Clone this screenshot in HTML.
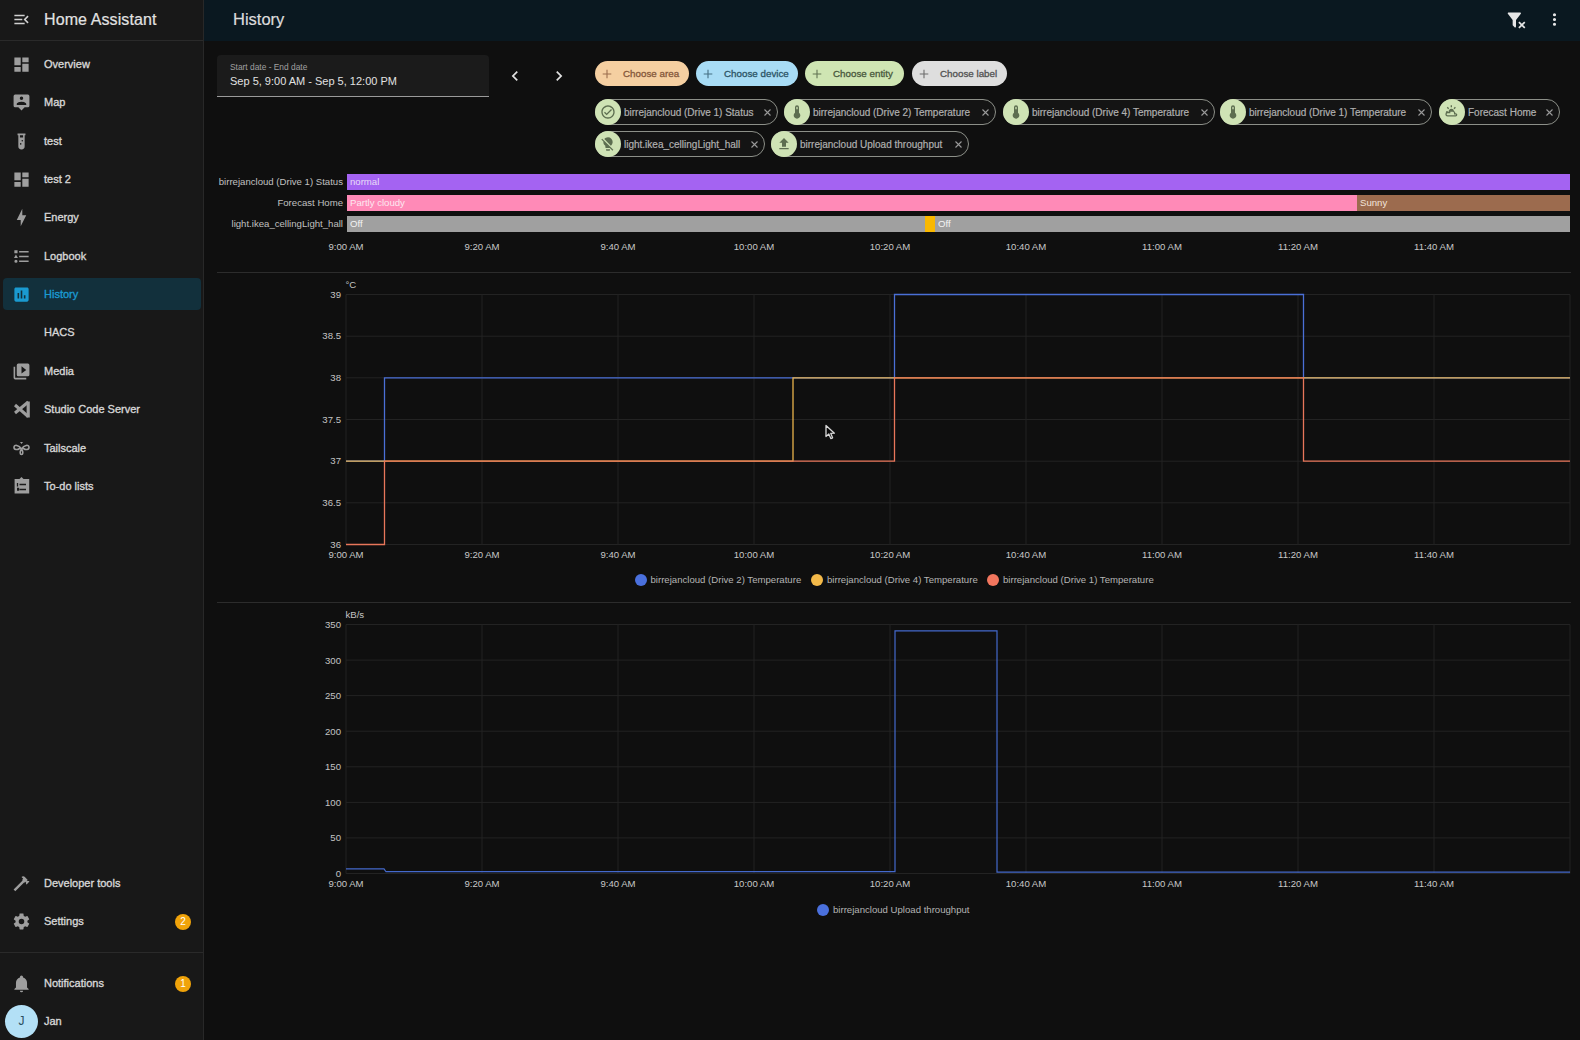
<!DOCTYPE html><html><head><meta charset="utf-8"><style>
*{box-sizing:border-box}
html,body{margin:0;padding:0;width:1580px;height:1040px;overflow:hidden;background:#0f0f0f;font-family:"Liberation Sans", sans-serif}
.a{position:absolute}
.sb{position:absolute;left:0;top:0;width:204px;height:1040px;background:#181818;border-right:1px solid #282828}
.it{position:absolute;left:44px;font-size:11px;color:#d6d6d6;white-space:nowrap;-webkit-text-stroke:0.35px #d6d6d6;line-height:14px}
.t{position:absolute;white-space:nowrap;line-height:1}
</style></head><body>

<div class="sb"></div>
<div class="a" style="left:0;top:40px;width:203px;height:1px;background:#2a2a2a"></div>
<svg style="position:absolute;left:12px;top:10px" width="19" height="19" viewBox="0 0 24 24"><path fill="#d0d0d0" d="M21,15.61L19.59,17L14.58,12L19.59,7L21,8.39L17.44,12L21,15.61M3,6H16V8H3V6M3,13V11H13V13H3M3,18V16H16V18H3Z"/></svg>
<div class="t" style="left:44px;top:12px;font-size:16px;letter-spacing:0.1px;color:#e2e2e2;-webkit-text-stroke:0.2px #e2e2e2">Home Assistant</div>
<div class="a" style="left:3px;top:278px;width:198px;height:32px;border-radius:4px;background:#12303c"></div>
<svg style="position:absolute;left:12px;top:54.7px" width="19" height="19" viewBox="0 0 24 24"><path fill="#9e9e9e" d="M13,3V9H21V3M13,21H21V11H13M3,21H11V15H3M3,13H11V3H3V13Z"/></svg>
<div class="it" style="top:57px;color:#d6d6d6;-webkit-text-stroke:0.35px #d6d6d6">Overview</div>
<svg style="position:absolute;left:12px;top:92.7px" width="19" height="19" viewBox="0 0 24 24"><path fill="#9e9e9e" d="M20,2H4A2,2 0 0,0 2,4V16A2,2 0 0,0 4,18H8L12,22L16,18H20A2,2 0 0,0 22,16V4A2,2 0 0,0 20,2M12,4.3A2.2,2.2 0 0,1 14.2,6.5A2.2,2.2 0 0,1 12,8.7A2.2,2.2 0 0,1 9.8,6.5A2.2,2.2 0 0,1 12,4.3M6,14C6,12 10,11 12,11C14,11 18,12 18,14V15H6V14Z"/></svg>
<div class="it" style="top:95px;color:#d6d6d6;-webkit-text-stroke:0.35px #d6d6d6">Map</div>
<svg style="position:absolute;left:12px;top:131.7px" width="19" height="19" viewBox="0 0 24 24"><path fill="#9e9e9e" d="M7,2V4H8V18A4,4 0 0,0 12,22A4,4 0 0,0 16,18V4H17V2H7M11,16C10.4,16 10,15.6 10,15C10,14.4 10.4,14 11,14C11.6,14 12,14.4 12,15C12,15.6 11.6,16 11,16M13,12C12.4,12 12,11.6 12,11C12,10.4 12.4,10 13,10C13.6,10 14,10.4 14,11C14,11.6 13.6,12 13,12M14,7H10V4H14V7Z"/></svg>
<div class="it" style="top:134px;color:#d6d6d6;-webkit-text-stroke:0.35px #d6d6d6">test</div>
<svg style="position:absolute;left:12px;top:169.7px" width="19" height="19" viewBox="0 0 24 24"><path fill="#9e9e9e" d="M13,3V9H21V3M13,21H21V11H13M3,21H11V15H3M3,13H11V3H3V13Z"/></svg>
<div class="it" style="top:172px;color:#d6d6d6;-webkit-text-stroke:0.35px #d6d6d6">test 2</div>
<svg style="position:absolute;left:12px;top:207.7px" width="19" height="19" viewBox="0 0 24 24"><path fill="#9e9e9e" d="M11 15H6L13 1V9H18L11 23V15Z"/></svg>
<div class="it" style="top:210px;color:#d6d6d6;-webkit-text-stroke:0.35px #d6d6d6">Energy</div>
<svg style="position:absolute;left:12px;top:246.7px" width="19" height="19" viewBox="0 0 24 24"><path fill="#9e9e9e" d="M5,9.5L7.5,14H2.5L5,9.5M3,4H7V8H3V4M5,20A2,2 0 0,0 7,18A2,2 0 0,0 5,16A2,2 0 0,0 3,18A2,2 0 0,0 5,20M9,5V7H21V5H9M9,19H21V17H9V19M9,13H21V11H9V13Z"/></svg>
<div class="it" style="top:249px;color:#d6d6d6;-webkit-text-stroke:0.35px #d6d6d6">Logbook</div>
<svg style="position:absolute;left:12px;top:284.7px" width="19" height="19" viewBox="0 0 24 24"><path fill="#1a9ad0" d="M19 3H5C3.9 3 3 3.9 3 5V19C3 20.1 3.9 21 5 21H19C20.1 21 21 20.1 21 19V5C21 3.9 20.1 3 19 3M9 17H7V10H9V17M13 17H11V7H13V17M17 17H15V13H17V17Z"/></svg>
<div class="it" style="top:287px;color:#1a9ad0;-webkit-text-stroke:0.35px #1a9ad0">History</div>
<div class="it" style="top:325px;color:#d6d6d6;-webkit-text-stroke:0.35px #d6d6d6">HACS</div>
<svg style="position:absolute;left:12px;top:361.7px" width="19" height="19" viewBox="0 0 24 24"><path fill="#9e9e9e" d="M4,6H2V20A2,2 0 0,0 4,22H18V20H4V6M20,2H8A2,2 0 0,0 6,4V16A2,2 0 0,0 8,18H20A2,2 0 0,0 22,16V4A2,2 0 0,0 20,2M12,14.5V5.5L18,10L12,14.5Z"/></svg>
<div class="it" style="top:364px;color:#d6d6d6;-webkit-text-stroke:0.35px #d6d6d6">Media</div>
<svg class="a" style="left:0;top:393px" width="40" height="32" viewBox="0 393 40 32"><g stroke="#9e9e9e" fill="none" stroke-linecap="butt"><path d="M28.2,402 L15,413" stroke-width="3"/><path d="M15,405 L28.2,416.5" stroke-width="3"/><path d="M28.2,401.5 V417.5" stroke-width="3.2"/></g></svg>
<div class="it" style="top:402px;color:#d6d6d6;-webkit-text-stroke:0.35px #d6d6d6">Studio Code Server</div>
<svg class="a" style="left:0;top:432px" width="40" height="32" viewBox="0 432 40 32"><g stroke="#9e9e9e" fill="none" stroke-width="1.6"><path d="M21.5,449 C19,445 14,444 14,447.5 C14,450 17.5,450 19.5,448.5 L23.5,448.5 C25.5,450 29,450 29,447.5 C29,444 24,445 21.5,449 C19.5,452 20,454.5 21.5,454.5 C23,454.5 23.5,452 21.5,449"/></g><path d="M20,442 H23 L21.5,444Z" fill="#9e9e9e"/></svg>
<div class="it" style="top:441px;color:#d6d6d6;-webkit-text-stroke:0.35px #d6d6d6">Tailscale</div>
<svg class="a" style="left:0;top:470px" width="40" height="32" viewBox="0 470 40 32"><path d="M14.6,479 H19.5 L21.5,477 L23.5,479 H29.2 V493.5 H14.6Z" fill="#9e9e9e"/><g stroke="#1b1b1b" stroke-width="1.3"><path d="M17.5,483 V486.5 M19.5,484.5 H26 M17,488.5 H18.5 V490 H17 M19.5,489.5 H26"/></g></svg>
<div class="it" style="top:479px;color:#d6d6d6;-webkit-text-stroke:0.35px #d6d6d6">To-do lists</div>
<svg style="position:absolute;left:12px;top:873.7px" width="19" height="19" viewBox="0 0 24 24"><path fill="#9e9e9e" d="M2 19.63L13.43 8.2L12.72 7.5L14.14 6.07L12 3.89C13.2 2.7 15.09 2.7 16.27 3.89L19.87 7.5L18.45 8.91H21.29L22 9.62L18.45 13.21L17.74 12.5V9.62L16.27 11.04L15.56 10.33L4.13 21.76L2 19.63Z"/></svg>
<div class="it" style="top:876px;color:#d6d6d6;-webkit-text-stroke:0.35px #d6d6d6">Developer tools</div>
<svg style="position:absolute;left:12px;top:911.7px" width="19" height="19" viewBox="0 0 24 24"><path fill="#9e9e9e" d="M12,15.5A3.5,3.5 0 0,1 8.5,12A3.5,3.5 0 0,1 12,8.5A3.5,3.5 0 0,1 15.5,12A3.5,3.5 0 0,1 12,15.5M19.43,12.97C19.47,12.65 19.5,12.33 19.5,12C19.5,11.67 19.47,11.34 19.43,11L21.54,9.37C21.73,9.22 21.78,8.95 21.66,8.73L19.66,5.27C19.54,5.05 19.27,4.96 19.05,5.05L16.56,6.05C16.04,5.66 15.5,5.32 14.87,5.07L14.5,2.42C14.46,2.18 14.25,2 14,2H10C9.75,2 9.54,2.18 9.5,2.42L9.13,5.07C8.5,5.32 7.96,5.66 7.44,6.05L4.95,5.05C4.73,4.96 4.46,5.05 4.34,5.27L2.34,8.73C2.21,8.95 2.27,9.22 2.46,9.37L4.57,11C4.53,11.34 4.5,11.67 4.5,12C4.5,12.33 4.53,12.65 4.57,12.97L2.46,14.63C2.27,14.78 2.21,15.05 2.34,15.27L4.34,18.73C4.46,18.95 4.73,19.03 4.95,18.95L7.44,17.94C7.96,18.34 8.5,18.68 9.13,18.93L9.5,21.58C9.54,21.82 9.75,22 10,22H14C14.25,22 14.46,21.82 14.5,21.58L14.87,18.93C15.5,18.67 16.04,18.34 16.56,17.94L19.05,18.95C19.27,19.03 19.54,18.95 19.66,18.73L21.66,15.27C21.78,15.05 21.73,14.78 21.54,14.63L19.43,12.97Z"/></svg>
<div class="it" style="top:914px;color:#d6d6d6;-webkit-text-stroke:0.35px #d6d6d6">Settings</div>
<svg style="position:absolute;left:12px;top:973.7px" width="19" height="19" viewBox="0 0 24 24"><path fill="#9e9e9e" d="M21,19V20H3V19L5,17V11C5,7.9 7.03,5.17 10,4.29C10,4.19 10,4.1 10,4A2,2 0 0,1 12,2A2,2 0 0,1 14,4C14,4.1 14,4.19 14,4.29C16.97,5.17 19,7.9 19,11V17L21,19M14,21A2,2 0 0,1 12,23A2,2 0 0,1 10,21"/></svg>
<div class="it" style="top:976px;color:#d6d6d6;-webkit-text-stroke:0.35px #d6d6d6">Notifications</div>
<div class="a" style="left:175px;top:914px;width:16px;height:16px;border-radius:50%;background:#f0a30a;color:#fff;font-size:10px;text-align:center;line-height:16px">2</div>
<div class="a" style="left:175px;top:976px;width:16px;height:16px;border-radius:50%;background:#f0a30a;color:#fff;font-size:10px;text-align:center;line-height:16px">1</div>
<div class="a" style="left:0;top:952px;width:203px;height:1px;background:#2a2a2a"></div>
<div class="a" style="left:5px;top:1005px;width:33px;height:33px;border-radius:50%;background:#b3e0f6;color:#2b4f5e;font-size:12px;text-align:center;line-height:33px">J</div>
<div class="it" style="top:1014px">Jan</div>
<div class="a" style="left:204px;top:0;width:1376px;height:41px;background:#0a1820"></div>
<div class="t" style="left:233px;top:11.4px;font-size:16.5px;color:#dcdcdc;-webkit-text-stroke:0.2px #dcdcdc">History</div>
<svg style="position:absolute;left:1506px;top:10px" width="20" height="20" viewBox="0 0 24 24"><path fill="#e6e6e6" d="M14.76,20.83L17.6,18L14.76,15.17L16.17,13.76L19,16.57L21.83,13.76L23.24,15.17L20.43,18L23.24,20.83L21.83,22.24L19,19.4L16.17,22.24L14.76,20.83M12,12V19.88C12.04,20.18 11.94,20.5 11.71,20.71C11.32,21.1 10.69,21.1 10.3,20.71L8.29,18.7C8.06,18.47 7.96,18.16 8,17.87V12H7.97L2.21,4.62C1.87,4.19 1.95,3.56 2.38,3.22C2.57,3.08 2.78,3 3,3H17C17.22,3 17.43,3.08 17.62,3.22C18.05,3.56 18.13,4.19 17.79,4.62L12.03,12H12Z"/></svg>
<svg style="position:absolute;left:1545px;top:10px" width="19" height="19" viewBox="0 0 24 24"><path fill="#e6e6e6" d="M12,16A2,2 0 0,1 14,18A2,2 0 0,1 12,20A2,2 0 0,1 10,18A2,2 0 0,1 12,16M12,10A2,2 0 0,1 14,12A2,2 0 0,1 12,14A2,2 0 0,1 10,12A2,2 0 0,1 12,10M12,4A2,2 0 0,1 14,6A2,2 0 0,1 12,8A2,2 0 0,1 10,6A2,2 0 0,1 12,4Z"/></svg>
<div class="a" style="left:217px;top:55px;width:272px;height:42px;background:#1b1b1b;border-radius:4px 4px 0 0;border-bottom:1px solid #9a9a9a"></div>
<div class="t" style="left:230px;top:63px;font-size:8.4px;color:#a0a0a0">Start date - End date</div>
<div class="t" style="left:230px;top:76px;font-size:11px;color:#e1e1e1">Sep 5, 9:00 AM - Sep 5, 12:00 PM</div>
<svg style="position:absolute;left:505px;top:66px" width="20" height="20" viewBox="0 0 24 24"><path fill="#e1e1e1" d="M15.41,16.58L10.83,12L15.41,7.41L14,6L8,12L14,18L15.41,16.58Z"/></svg>
<svg style="position:absolute;left:549px;top:66px" width="20" height="20" viewBox="0 0 24 24"><path fill="#e1e1e1" d="M8.59,16.58L13.17,12L8.59,7.41L10,6L16,12L10,18L8.59,16.58Z"/></svg>
<div class="a" style="left:595px;top:61px;width:94px;height:25px;border-radius:13px;background:#f5cfa1"></div>
<svg class="a" style="left:602px;top:69px" width="10" height="10" viewBox="0 0 10 10"><path d="M5,0.7V9.3M0.7,5H9.3" stroke="#85573a" stroke-width="1.1" opacity="0.8"/></svg>
<div class="t" style="left:623px;top:68.6px;font-size:9.8px;color:#85573a;-webkit-text-stroke:0.3px #85573a">Choose area</div>
<div class="a" style="left:696px;top:61px;width:102px;height:25px;border-radius:13px;background:#a8dcf5"></div>
<svg class="a" style="left:703px;top:69px" width="10" height="10" viewBox="0 0 10 10"><path d="M5,0.7V9.3M0.7,5H9.3" stroke="#2c5466" stroke-width="1.1" opacity="0.8"/></svg>
<div class="t" style="left:724px;top:68.6px;font-size:9.8px;color:#2c5466;-webkit-text-stroke:0.3px #2c5466">Choose device</div>
<div class="a" style="left:805px;top:61px;width:99px;height:25px;border-radius:13px;background:#cfe5b3"></div>
<svg class="a" style="left:812px;top:69px" width="10" height="10" viewBox="0 0 10 10"><path d="M5,0.7V9.3M0.7,5H9.3" stroke="#48583c" stroke-width="1.1" opacity="0.8"/></svg>
<div class="t" style="left:833px;top:68.6px;font-size:9.8px;color:#48583c;-webkit-text-stroke:0.3px #48583c">Choose entity</div>
<div class="a" style="left:912px;top:61px;width:95px;height:25px;border-radius:13px;background:#dedede"></div>
<svg class="a" style="left:919px;top:69px" width="10" height="10" viewBox="0 0 10 10"><path d="M5,0.7V9.3M0.7,5H9.3" stroke="#525252" stroke-width="1.1" opacity="0.8"/></svg>
<div class="t" style="left:940px;top:68.6px;font-size:9.8px;color:#525252;-webkit-text-stroke:0.3px #525252">Choose label</div>
<div class="a" style="left:595px;top:99px;width:183px;height:26px;border-radius:13px;background:#141414;border:1px solid #8c8f88"></div>
<div class="a" style="left:595px;top:99px;width:26px;height:26px;border-radius:13px;background:#cfe3b5"></div>
<svg style="position:absolute;left:600px;top:104px" width="16" height="16" viewBox="0 0 24 24"><path fill="#5d6e50" d="M12 2C6.5 2 2 6.5 2 12S6.5 22 12 22 22 17.5 22 12 17.5 2 12 2M12 20C7.59 20 4 16.41 4 12S7.59 4 12 4 20 7.59 20 12 16.41 20 12 20M16.59 7.58L10 14.17L7.41 11.59L6 13L10 17L18 9L16.59 7.58Z"/></svg>
<div class="t" style="left:624px;top:108px;font-size:10px;color:#b0b0b0;-webkit-text-stroke:0.2px #b0b0b0">birrejancloud (Drive 1) Status</div>
<svg class="a" style="left:764px;top:108.5px" width="7" height="7" viewBox="0 0 7 7"><path d="M0.5,0.5L6.5,6.5M6.5,0.5L0.5,6.5" stroke="#9a9a9a" stroke-width="1.1"/></svg>
<div class="a" style="left:784px;top:99px;width:212px;height:26px;border-radius:13px;background:#141414;border:1px solid #8c8f88"></div>
<div class="a" style="left:784px;top:99px;width:26px;height:26px;border-radius:13px;background:#cfe3b5"></div>
<svg style="position:absolute;left:789px;top:104px" width="16" height="16" viewBox="0 0 24 24"><path fill="#5d6e50" d="M15 13V5A3 3 0 0 0 9 5V13A5 5 0 1 0 15 13M12 4A1 1 0 0 1 13 5V8H11V5A1 1 0 0 1 12 4Z"/></svg>
<div class="t" style="left:813px;top:108px;font-size:10px;color:#b0b0b0;-webkit-text-stroke:0.2px #b0b0b0">birrejancloud (Drive 2) Temperature</div>
<svg class="a" style="left:982px;top:108.5px" width="7" height="7" viewBox="0 0 7 7"><path d="M0.5,0.5L6.5,6.5M6.5,0.5L0.5,6.5" stroke="#9a9a9a" stroke-width="1.1"/></svg>
<div class="a" style="left:1003px;top:99px;width:212px;height:26px;border-radius:13px;background:#141414;border:1px solid #8c8f88"></div>
<div class="a" style="left:1003px;top:99px;width:26px;height:26px;border-radius:13px;background:#cfe3b5"></div>
<svg style="position:absolute;left:1008px;top:104px" width="16" height="16" viewBox="0 0 24 24"><path fill="#5d6e50" d="M15 13V5A3 3 0 0 0 9 5V13A5 5 0 1 0 15 13M12 4A1 1 0 0 1 13 5V8H11V5A1 1 0 0 1 12 4Z"/></svg>
<div class="t" style="left:1032px;top:108px;font-size:10px;color:#b0b0b0;-webkit-text-stroke:0.2px #b0b0b0">birrejancloud (Drive 4) Temperature</div>
<svg class="a" style="left:1201px;top:108.5px" width="7" height="7" viewBox="0 0 7 7"><path d="M0.5,0.5L6.5,6.5M6.5,0.5L0.5,6.5" stroke="#9a9a9a" stroke-width="1.1"/></svg>
<div class="a" style="left:1220px;top:99px;width:212px;height:26px;border-radius:13px;background:#141414;border:1px solid #8c8f88"></div>
<div class="a" style="left:1220px;top:99px;width:26px;height:26px;border-radius:13px;background:#cfe3b5"></div>
<svg style="position:absolute;left:1225px;top:104px" width="16" height="16" viewBox="0 0 24 24"><path fill="#5d6e50" d="M15 13V5A3 3 0 0 0 9 5V13A5 5 0 1 0 15 13M12 4A1 1 0 0 1 13 5V8H11V5A1 1 0 0 1 12 4Z"/></svg>
<div class="t" style="left:1249px;top:108px;font-size:10px;color:#b0b0b0;-webkit-text-stroke:0.2px #b0b0b0">birrejancloud (Drive 1) Temperature</div>
<svg class="a" style="left:1418px;top:108.5px" width="7" height="7" viewBox="0 0 7 7"><path d="M0.5,0.5L6.5,6.5M6.5,0.5L0.5,6.5" stroke="#9a9a9a" stroke-width="1.1"/></svg>
<div class="a" style="left:1439px;top:99px;width:121px;height:26px;border-radius:13px;background:#141414;border:1px solid #8c8f88"></div>
<div class="a" style="left:1439px;top:99px;width:26px;height:26px;border-radius:13px;background:#cfe3b5"></div>
<svg style="position:absolute;left:1444px;top:104px" width="16" height="16" viewBox="0 0 24 24"><path fill="#5d6e50" d="M3,11H6V13H3V11M12,2V5H10V2H12M5.6,4.2L7.7,6.3L6.3,7.7L4.2,5.6L5.6,4.2M16.4,4.2L17.8,5.6L15.7,7.7L14.3,6.3L16.4,4.2M11,7A4,4 0 0,1 15,10.4C16.2,11 17,12.3 17,13.7H17.5A2.5,2.5 0 0,1 20,16.2A2.5,2.5 0 0,1 17.5,18.7H5.5A3.5,3.5 0 0,1 2,15.2A3.5,3.5 0 0,1 5.5,11.7H7.1A4,4 0 0,1 11,7M5.5,13.7A1.5,1.5 0 0,0 4,15.2A1.5,1.5 0 0,0 5.5,16.7H17.5A0.5,0.5 0 0,0 18,16.2A0.5,0.5 0 0,0 17.5,15.7H15V13.7A2,2 0 0,0 13,11.7H9.5V13.7H5.5Z"/></svg>
<div class="t" style="left:1468px;top:108px;font-size:10px;color:#b0b0b0;-webkit-text-stroke:0.2px #b0b0b0">Forecast Home</div>
<svg class="a" style="left:1546px;top:108.5px" width="7" height="7" viewBox="0 0 7 7"><path d="M0.5,0.5L6.5,6.5M6.5,0.5L0.5,6.5" stroke="#9a9a9a" stroke-width="1.1"/></svg>
<div class="a" style="left:595px;top:131px;width:170px;height:26px;border-radius:13px;background:#141414;border:1px solid #8c8f88"></div>
<div class="a" style="left:595px;top:131px;width:26px;height:26px;border-radius:13px;background:#cfe3b5"></div>
<svg style="position:absolute;left:600px;top:136px" width="16" height="16" viewBox="0 0 24 24"><path fill="#5d6e50" d="M12,2C9.76,2 7.78,3.05 6.5,4.68L16.31,14.5C17.94,13.21 19,11.24 19,9A7,7 0 0,0 12,2M3.28,4L2,5.27L5.04,8.3C5,8.53 5,8.76 5,9C5,11.38 6.19,13.47 8,14.74V17A1,1 0 0,0 9,18H14.73L18.73,22L20,20.72L3.28,4M9,20V21A1,1 0 0,0 10,22H14A1,1 0 0,0 15,21V20H9Z"/></svg>
<div class="t" style="left:624px;top:140px;font-size:10px;color:#b0b0b0;-webkit-text-stroke:0.2px #b0b0b0">light.ikea_cellingLight_hall</div>
<svg class="a" style="left:751px;top:140.5px" width="7" height="7" viewBox="0 0 7 7"><path d="M0.5,0.5L6.5,6.5M6.5,0.5L0.5,6.5" stroke="#9a9a9a" stroke-width="1.1"/></svg>
<div class="a" style="left:771px;top:131px;width:198px;height:26px;border-radius:13px;background:#141414;border:1px solid #8c8f88"></div>
<div class="a" style="left:771px;top:131px;width:26px;height:26px;border-radius:13px;background:#cfe3b5"></div>
<svg style="position:absolute;left:776px;top:136px" width="16" height="16" viewBox="0 0 24 24"><path fill="#5d6e50" d="M9,16V10H5L12,3L19,10H15V16H9M5,20V18H19V20H5Z"/></svg>
<div class="t" style="left:800px;top:140px;font-size:10px;color:#b0b0b0;-webkit-text-stroke:0.2px #b0b0b0">birrejancloud Upload throughput</div>
<svg class="a" style="left:955px;top:140.5px" width="7" height="7" viewBox="0 0 7 7"><path d="M0.5,0.5L6.5,6.5M6.5,0.5L0.5,6.5" stroke="#9a9a9a" stroke-width="1.1"/></svg>
<div class="t" style="right:1237px;top:177px;font-size:9.6px;color:#c0c0c0;text-align:right">birrejancloud (Drive 1) Status</div>
<div class="t" style="right:1237px;top:198px;font-size:9.6px;color:#c0c0c0;text-align:right">Forecast Home</div>
<div class="t" style="right:1237px;top:219px;font-size:9.6px;color:#c0c0c0;text-align:right">light.ikea_cellingLight_hall</div>
<div class="a" style="left:347px;top:174px;width:1223px;height:16px;background:#a463f2"></div>
<div class="t" style="left:350px;top:177px;font-size:9.6px;color:#e8dcf8">normal</div>
<div class="a" style="left:347px;top:195px;width:1010px;height:16px;background:#ff8ab7"></div>
<div class="t" style="left:350px;top:198px;font-size:9.6px;color:#fde8f0">Partly cloudy</div>
<div class="a" style="left:1357px;top:195px;width:213px;height:16px;background:#9c6b4e"></div>
<div class="t" style="left:1360px;top:198px;font-size:9.6px;color:#f3e5dc">Sunny</div>
<div class="a" style="left:347px;top:216px;width:1223px;height:16px;background:#a0a0a0"></div>
<div class="t" style="left:350px;top:219px;font-size:9.6px;color:#f4f4f4">Off</div>
<div class="a" style="left:925px;top:216px;width:10px;height:16px;background:#f9b800"></div>
<div class="t" style="left:938px;top:219px;font-size:9.6px;color:#f4f4f4">Off</div>
<div class="t" style="left:306px;width:80px;top:242px;font-size:9.6px;color:#c8c8c8;text-align:center">9:00 AM</div>
<div class="t" style="left:442px;width:80px;top:242px;font-size:9.6px;color:#c8c8c8;text-align:center">9:20 AM</div>
<div class="t" style="left:578px;width:80px;top:242px;font-size:9.6px;color:#c8c8c8;text-align:center">9:40 AM</div>
<div class="t" style="left:714px;width:80px;top:242px;font-size:9.6px;color:#c8c8c8;text-align:center">10:00 AM</div>
<div class="t" style="left:850px;width:80px;top:242px;font-size:9.6px;color:#c8c8c8;text-align:center">10:20 AM</div>
<div class="t" style="left:986px;width:80px;top:242px;font-size:9.6px;color:#c8c8c8;text-align:center">10:40 AM</div>
<div class="t" style="left:1122px;width:80px;top:242px;font-size:9.6px;color:#c8c8c8;text-align:center">11:00 AM</div>
<div class="t" style="left:1258px;width:80px;top:242px;font-size:9.6px;color:#c8c8c8;text-align:center">11:20 AM</div>
<div class="t" style="left:1394px;width:80px;top:242px;font-size:9.6px;color:#c8c8c8;text-align:center">11:40 AM</div>
<div class="a" style="left:217px;top:272px;width:1354px;height:1px;background:#2c2c2c"></div>
<div class="a" style="left:217px;top:602px;width:1354px;height:1px;background:#2c2c2c"></div>
<svg class="a" style="left:0;top:0" width="1580" height="1040"><line x1="346" x2="1570" y1="294.5" y2="294.5" stroke="#232323" stroke-width="1"/><line x1="346" x2="1570" y1="336.2" y2="336.2" stroke="#232323" stroke-width="1"/><line x1="346" x2="1570" y1="377.8" y2="377.8" stroke="#232323" stroke-width="1"/><line x1="346" x2="1570" y1="419.5" y2="419.5" stroke="#232323" stroke-width="1"/><line x1="346" x2="1570" y1="461.2" y2="461.2" stroke="#232323" stroke-width="1"/><line x1="346" x2="1570" y1="502.8" y2="502.8" stroke="#232323" stroke-width="1"/><line x1="346" x2="1570" y1="544.5" y2="544.5" stroke="#232323" stroke-width="1"/><line x1="346" x2="346" y1="294.5" y2="544.5" stroke="#232323" stroke-width="1"/><line x1="482" x2="482" y1="294.5" y2="544.5" stroke="#232323" stroke-width="1"/><line x1="618" x2="618" y1="294.5" y2="544.5" stroke="#232323" stroke-width="1"/><line x1="754" x2="754" y1="294.5" y2="544.5" stroke="#232323" stroke-width="1"/><line x1="890" x2="890" y1="294.5" y2="544.5" stroke="#232323" stroke-width="1"/><line x1="1026" x2="1026" y1="294.5" y2="544.5" stroke="#232323" stroke-width="1"/><line x1="1162" x2="1162" y1="294.5" y2="544.5" stroke="#232323" stroke-width="1"/><line x1="1298" x2="1298" y1="294.5" y2="544.5" stroke="#232323" stroke-width="1"/><line x1="1434" x2="1434" y1="294.5" y2="544.5" stroke="#232323" stroke-width="1"/><line x1="1570" x2="1570" y1="294.5" y2="544.5" stroke="#232323" stroke-width="1"/><line x1="346" x2="1570" y1="624.5" y2="624.5" stroke="#232323" stroke-width="1"/><line x1="346" x2="1570" y1="660.1" y2="660.1" stroke="#232323" stroke-width="1"/><line x1="346" x2="1570" y1="695.6" y2="695.6" stroke="#232323" stroke-width="1"/><line x1="346" x2="1570" y1="731.2" y2="731.2" stroke="#232323" stroke-width="1"/><line x1="346" x2="1570" y1="766.8" y2="766.8" stroke="#232323" stroke-width="1"/><line x1="346" x2="1570" y1="802.4" y2="802.4" stroke="#232323" stroke-width="1"/><line x1="346" x2="1570" y1="837.9" y2="837.9" stroke="#232323" stroke-width="1"/><line x1="346" x2="1570" y1="873.5" y2="873.5" stroke="#232323" stroke-width="1"/><line x1="346" x2="346" y1="624.5" y2="873.5" stroke="#232323" stroke-width="1"/><line x1="482" x2="482" y1="624.5" y2="873.5" stroke="#232323" stroke-width="1"/><line x1="618" x2="618" y1="624.5" y2="873.5" stroke="#232323" stroke-width="1"/><line x1="754" x2="754" y1="624.5" y2="873.5" stroke="#232323" stroke-width="1"/><line x1="890" x2="890" y1="624.5" y2="873.5" stroke="#232323" stroke-width="1"/><line x1="1026" x2="1026" y1="624.5" y2="873.5" stroke="#232323" stroke-width="1"/><line x1="1162" x2="1162" y1="624.5" y2="873.5" stroke="#232323" stroke-width="1"/><line x1="1298" x2="1298" y1="624.5" y2="873.5" stroke="#232323" stroke-width="1"/><line x1="1434" x2="1434" y1="624.5" y2="873.5" stroke="#232323" stroke-width="1"/><line x1="1570" x2="1570" y1="624.5" y2="873.5" stroke="#232323" stroke-width="1"/><path d="M346,461.1666666666667 H384.5 V377.83333333333337 H894.5 V294.5 H1303.5 V377.83333333333337 H1570" fill="none" stroke="#4a6fd6" stroke-width="1.3"/><path d="M346,461.1666666666667 H793 V377.83333333333337 H1570" fill="none" stroke="#e9b24a" stroke-width="1.3"/><path d="M346,544.5 H384.5 V461.1666666666667 H894.5 V377.83333333333337 H1303.5 V461.1666666666667 H1570" fill="none" stroke="#e8765a" stroke-width="1.3"/><path d="M346,868.8757142857143 H384 L386,871.7214285714285 H895 V630.9028571428571 H997 V872.0771428571428 H1570" fill="none" stroke="#4469cc" stroke-width="1.2"/></svg>
<div class="t" style="right:1239px;top:289.5px;font-size:9.6px;color:#c4c4c4;text-align:right">39</div>
<div class="t" style="right:1239px;top:331.2px;font-size:9.6px;color:#c4c4c4;text-align:right">38.5</div>
<div class="t" style="right:1239px;top:372.8px;font-size:9.6px;color:#c4c4c4;text-align:right">38</div>
<div class="t" style="right:1239px;top:414.5px;font-size:9.6px;color:#c4c4c4;text-align:right">37.5</div>
<div class="t" style="right:1239px;top:456.2px;font-size:9.6px;color:#c4c4c4;text-align:right">37</div>
<div class="t" style="right:1239px;top:497.8px;font-size:9.6px;color:#c4c4c4;text-align:right">36.5</div>
<div class="t" style="right:1239px;top:539.5px;font-size:9.6px;color:#c4c4c4;text-align:right">36</div>
<div class="t" style="left:345.5px;top:279.5px;font-size:9.6px;color:#c4c4c4">°C</div>
<div class="t" style="left:306px;width:80px;top:550px;font-size:9.6px;color:#c8c8c8;text-align:center">9:00 AM</div>
<div class="t" style="left:442px;width:80px;top:550px;font-size:9.6px;color:#c8c8c8;text-align:center">9:20 AM</div>
<div class="t" style="left:578px;width:80px;top:550px;font-size:9.6px;color:#c8c8c8;text-align:center">9:40 AM</div>
<div class="t" style="left:714px;width:80px;top:550px;font-size:9.6px;color:#c8c8c8;text-align:center">10:00 AM</div>
<div class="t" style="left:850px;width:80px;top:550px;font-size:9.6px;color:#c8c8c8;text-align:center">10:20 AM</div>
<div class="t" style="left:986px;width:80px;top:550px;font-size:9.6px;color:#c8c8c8;text-align:center">10:40 AM</div>
<div class="t" style="left:1122px;width:80px;top:550px;font-size:9.6px;color:#c8c8c8;text-align:center">11:00 AM</div>
<div class="t" style="left:1258px;width:80px;top:550px;font-size:9.6px;color:#c8c8c8;text-align:center">11:20 AM</div>
<div class="t" style="left:1394px;width:80px;top:550px;font-size:9.6px;color:#c8c8c8;text-align:center">11:40 AM</div>
<div class="t" style="right:1239px;top:620.0px;font-size:9.6px;color:#c4c4c4;text-align:right">350</div>
<div class="t" style="right:1239px;top:655.6px;font-size:9.6px;color:#c4c4c4;text-align:right">300</div>
<div class="t" style="right:1239px;top:691.1px;font-size:9.6px;color:#c4c4c4;text-align:right">250</div>
<div class="t" style="right:1239px;top:726.7px;font-size:9.6px;color:#c4c4c4;text-align:right">200</div>
<div class="t" style="right:1239px;top:762.3px;font-size:9.6px;color:#c4c4c4;text-align:right">150</div>
<div class="t" style="right:1239px;top:797.9px;font-size:9.6px;color:#c4c4c4;text-align:right">100</div>
<div class="t" style="right:1239px;top:833.4px;font-size:9.6px;color:#c4c4c4;text-align:right">50</div>
<div class="t" style="right:1239px;top:869.0px;font-size:9.6px;color:#c4c4c4;text-align:right">0</div>
<div class="t" style="left:345.5px;top:610px;font-size:9.6px;color:#c4c4c4">kB/s</div>
<div class="t" style="left:306px;width:80px;top:879px;font-size:9.6px;color:#c8c8c8;text-align:center">9:00 AM</div>
<div class="t" style="left:442px;width:80px;top:879px;font-size:9.6px;color:#c8c8c8;text-align:center">9:20 AM</div>
<div class="t" style="left:578px;width:80px;top:879px;font-size:9.6px;color:#c8c8c8;text-align:center">9:40 AM</div>
<div class="t" style="left:714px;width:80px;top:879px;font-size:9.6px;color:#c8c8c8;text-align:center">10:00 AM</div>
<div class="t" style="left:850px;width:80px;top:879px;font-size:9.6px;color:#c8c8c8;text-align:center">10:20 AM</div>
<div class="t" style="left:986px;width:80px;top:879px;font-size:9.6px;color:#c8c8c8;text-align:center">10:40 AM</div>
<div class="t" style="left:1122px;width:80px;top:879px;font-size:9.6px;color:#c8c8c8;text-align:center">11:00 AM</div>
<div class="t" style="left:1258px;width:80px;top:879px;font-size:9.6px;color:#c8c8c8;text-align:center">11:20 AM</div>
<div class="t" style="left:1394px;width:80px;top:879px;font-size:9.6px;color:#c8c8c8;text-align:center">11:40 AM</div>
<div class="a" style="left:634.5px;top:574px;width:12px;height:12px;border-radius:50%;background:#4a70dd"></div>
<div class="t" style="left:650.5px;top:575px;font-size:9.6px;color:#b4b4b4">birrejancloud (Drive 2) Temperature</div>
<div class="a" style="left:811px;top:574px;width:12px;height:12px;border-radius:50%;background:#f3b949"></div>
<div class="t" style="left:827px;top:575px;font-size:9.6px;color:#b4b4b4">birrejancloud (Drive 4) Temperature</div>
<div class="a" style="left:987px;top:574px;width:12px;height:12px;border-radius:50%;background:#f2765e"></div>
<div class="t" style="left:1003px;top:575px;font-size:9.6px;color:#b4b4b4">birrejancloud (Drive 1) Temperature</div>
<div class="a" style="left:817px;top:904px;width:12px;height:12px;border-radius:50%;background:#4a70dd"></div>
<div class="t" style="left:833px;top:905px;font-size:9.6px;color:#b4b4b4">birrejancloud Upload throughput</div>
<svg class="a" style="left:820px;top:420px" width="20" height="24" viewBox="820 420 20 24"><path d="M826,425.5 L826,436.5 L828.8,434 L830.8,438.6 L832.6,437.8 L830.8,433.4 L834.4,433.2 Z" fill="#0a0a0a" stroke="#d8d8d8" stroke-width="1.3" stroke-linejoin="round"/></svg>
</body></html>
